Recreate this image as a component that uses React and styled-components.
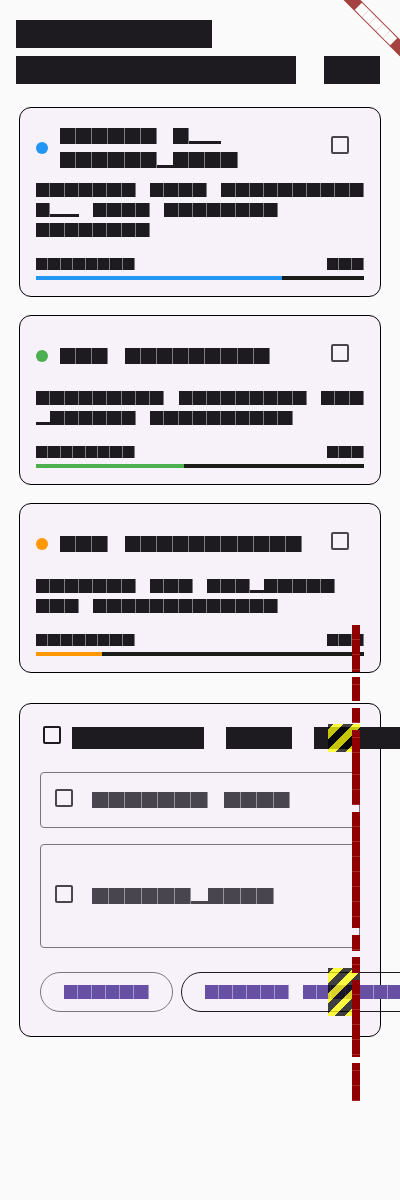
import React, { Fragment } from "react";
import styled, { createGlobalStyle } from "styled-components";

const GlobalStyle = createGlobalStyle`
  html, body {
    margin: 0;
    padding: 0;
    background: #fafafa;
    overflow: hidden;
  }
  body {
    font-family: "Liberation Sans", "Noto Sans", sans-serif;
  }
  * {
    box-sizing: border-box;
  }
`;

const INK = "#1d1b20";
const MUTED = "#49454f";
const OUTLINE = "#79747e";
const PRIMARY = "#6750a4";

// test-font metrics: every glyph is a square box of the font size
const type = {
  headline: { size: 28, lh: 36, ls: 0 },
  title: { size: 16, lh: 24, ls: 0.15 },
  titleLarge: { size: 22, lh: 28, ls: 0 },
  body: { size: 14, lh: 20, ls: 0.25 },
  bodyLarge: { size: 16, lh: 24, ls: 0.5 },
  small: { size: 12, lh: 16, ls: 0.4 },
  label: { size: 14, lh: 20, ls: 0.1 },
  banner: { size: 10.2, lh: 12, ls: 0 },
};

const tasks = [
  {
    color: "#2196f3",
    title: "Mobile App Development",
    text: "Rebuild core navigation app with smoother effects.",
    progress: 75,
  },
  {
    color: "#4caf50",
    title: "API Migration",
    text: "Migrating remaining old payment libraries.",
    progress: 45,
  },
  {
    color: "#ff9800",
    title: "CRM Integration",
    text: "Connect CRM campaigns and notifications",
    progress: 20,
  },
];

const subtasks = [
  { label: "Backend APIs", height: 56 },
  { label: "Development", height: 104 },
];

const overflowLabel = [
  { text: "RIGHT", h: 47, gap: 0 },
  { text: "BY", h: 24, gap: 5 },
  { text: "38", h: 15, gap: 7 },
  { text: "OVERFLOWED", h: 75, gap: 7 },
  { text: "PIXELS RIGHT", h: 116, gap: 7 },
  { text: "BY", h: 16, gap: 7 },
  { text: "38", h: 16, gap: 6 },
  { text: "OVERFLOWED", h: 77, gap: 7 },
  { text: "PIXELS", h: 38, gap: 6 },
];

function Txt({ text, kind, color = INK, nowrap, grow }) {
  const { size, lh, ls } = type[kind];
  return (
    <Lines $space={size + ls} $lead={(lh - size) / 2} $nowrap={nowrap} $grow={grow}>
      {text.split(" ").map((word, i) => (
        <Fragment key={i}>
          {i > 0 && " "}
          <Word>
            {[...word].map((c, j) => (
              <Glyph key={j} $size={size} $ls={ls} $color={color} $low={c === "p"}>
                {c}
              </Glyph>
            ))}
          </Word>
        </Fragment>
      ))}
    </Lines>
  );
}

function TaskCard({ task }) {
  return (
    <Card>
      <TitleRow>
        <Dot $color={task.color} />
        <Txt text={task.title} kind="title" grow />
        <CheckSlot>
          <Box $color={MUTED} />
        </CheckSlot>
      </TitleRow>
      <Description>
        <Txt text={task.text} kind="body" />
      </Description>
      <MetaRow>
        <Txt text="Progress" kind="small" />
        <Txt text={`${task.progress}%`} kind="small" />
      </MetaRow>
      <Track>
        <Fill $color={task.color} style={{ width: `${task.progress}%` }} />
      </Track>
    </Card>
  );
}

export default function App() {
  return (
    <Page>
      <GlobalStyle />
      <Header>
        <Txt text="Project Milestones Q4" kind="headline" />
      </Header>

      <TaskList>
        {tasks.map((t) => (
          <TaskCard key={t.title} task={t} />
        ))}
      </TaskList>

      <SubtaskCard>
        <HeadRow>
          <SmallSlot>
            <Box $color={INK} />
          </SmallSlot>
          <Txt text="Finish the onboarding flow" kind="titleLarge" nowrap />
          <OverflowMark />
        </HeadRow>

        <Subtasks>
          {subtasks.map((s) => (
            <Subtask key={s.label} $h={s.height}>
              <SubCheck>
                <Box $color={MUTED} />
              </SubCheck>
              <Txt text={s.label} kind="bodyLarge" color={MUTED} nowrap />
            </Subtask>
          ))}
        </Subtasks>

        <Actions>
          <Pill $outline={OUTLINE}>
            <Txt text="Cancel" kind="label" color={PRIMARY} nowrap />
          </Pill>
          <Pill $outline={INK} $gap>
            <Txt text="Submit changes" kind="label" color={PRIMARY} nowrap />
          </Pill>
          <OverflowMark />
        </Actions>
      </SubtaskCard>

      <OverflowText aria-hidden="true">
        {overflowLabel.map((s, i) => (
          <Segment key={i} $h={s.h} $gap={s.gap}>
            {s.text}
          </Segment>
        ))}
      </OverflowText>

      <Banner>
        <Txt text="DEBUG" kind="banner" color="#ffffff" nowrap />
      </Banner>
    </Page>
  );
}

const Page = styled.div`
  position: relative;
  width: 400px;
  min-height: 1200px;
  padding: 16px 16px 0;
  overflow: hidden;
  background: #fafafa;
`;

const Header = styled.header`
  margin-bottom: 19px;
`;

const Lines = styled.span`
  display: flex;
  flex-wrap: ${(p) => (p.$nowrap ? "nowrap" : "wrap")};
  align-content: flex-start;
  column-gap: ${(p) => p.$space}px;
  row-gap: ${(p) => p.$lead * 2}px;
  padding: ${(p) => p.$lead}px 0;
  flex: ${(p) => (p.$grow ? "1 1 0" : "none")};
  min-width: 0;
`;

const Word = styled.span`
  display: flex;
  flex: none;
`;

const Glyph = styled.span`
  position: relative;
  display: block;
  flex: none;
  width: ${(p) => p.$size + p.$ls}px;
  height: ${(p) => p.$size}px;
  background: ${(p) =>
    p.$low ? `linear-gradient(to top, ${p.$color} 20%, transparent 20%)` : p.$color};
  color: transparent;
  font-size: ${(p) => p.$size * 0.6}px;
  line-height: ${(p) => p.$size}px;
  text-align: center;
  overflow: hidden;

  &::after {
    content: "";
    display: ${(p) => (p.$ls > 0 && !p.$low ? "block" : "none")};
    position: absolute;
    top: 0;
    right: 0;
    width: 1px;
    height: 100%;
    background: rgba(247, 242, 250, 0.45);
  }
`;

const TaskList = styled.div`
  display: flex;
  flex-direction: column;
  gap: 18px;
`;

const Card = styled.section`
  margin: 0 3px;
  padding: 16px;
  background: #f7f2fa;
  border: 1px solid #000;
  border-radius: 12px;
`;

const TitleRow = styled.div`
  display: flex;
  align-items: center;
  min-height: 48px;
`;

const Dot = styled.span`
  flex: none;
  width: 12px;
  height: 12px;
  margin-right: 12px;
  border-radius: 50%;
  background: ${(p) => p.$color};
`;

const CheckSlot = styled.span`
  flex: none;
  align-self: flex-start;
  display: flex;
  justify-content: center;
  width: 48px;
  height: 48px;
  padding-top: 12px;
`;

const Box = styled.span`
  display: block;
  flex: none;
  width: 18px;
  height: 18px;
  border: 2px solid ${(p) => p.$color};
  border-radius: 2px;
`;

const Description = styled.div`
  margin-top: 8px;
`;

const MetaRow = styled.div`
  display: flex;
  justify-content: space-between;
  margin-top: 16px;
`;

const Track = styled.div`
  height: 4px;
  margin-top: 4px;
  background: #1a1c18;
`;

const Fill = styled.div`
  height: 100%;
  background: ${(p) => p.$color};
`;

const SubtaskCard = styled.section`
  margin: 30px 3px 0;
  padding: 20px;
  background: #f7f2fa;
  border: 1px solid #000;
  border-radius: 12px;
`;

const HeadRow = styled.div`
  position: relative;
  display: flex;
  height: 28px;
`;

const SmallSlot = styled.span`
  flex: none;
  width: 24px;
  margin-right: 8px;
  padding: 2px 0 0 3px;
`;

const Subtasks = styled.div`
  display: flex;
  flex-direction: column;
  gap: 16px;
  margin-top: 20px;
`;

const Subtask = styled.div`
  display: flex;
  align-items: center;
  height: ${(p) => p.$h}px;
  padding-left: 14px;
  border: 1px solid ${OUTLINE};
  border-radius: 4px;
`;

const SubCheck = styled.span`
  flex: none;
  margin: -5px 19px 0 0;
`;

const Actions = styled.div`
  position: relative;
  display: flex;
  align-items: center;
  height: 48px;
  margin-top: 20px;
`;

const Pill = styled.button`
  flex: none;
  display: flex;
  align-items: center;
  height: 40px;
  margin: 0 0 0 ${(p) => (p.$gap ? 8 : 0)}px;
  padding: 0 23px;
  background: transparent;
  border: 1px solid ${(p) => p.$outline};
  border-radius: 20px;
`;

const OverflowMark = styled.span`
  position: absolute;
  top: 0;
  right: 0;
  width: 32px;
  height: 100%;
  pointer-events: none;
  background: repeating-linear-gradient(
    135deg,
    rgba(0, 0, 0, 0.75) 0 3.54px,
    rgba(255, 255, 0, 0.75) 3.54px 10.61px,
    rgba(0, 0, 0, 0.75) 10.61px 14.14px
  );
`;

const OverflowText = styled.div`
  position: absolute;
  top: 625px;
  left: 352px;
  width: 8px;
  display: flex;
  flex-direction: column;
`;

const Segment = styled.span`
  display: block;
  height: ${(p) => p.$h}px;
  margin-top: ${(p) => p.$gap}px;
  background: repeating-linear-gradient(180deg, #900000 0 7px, #a52a2a 7px 7.5px);
  color: transparent;
  font-size: 6px;
  line-height: 7.5px;
  overflow: hidden;
  word-break: break-all;
`;

const Banner = styled.div`
  position: absolute;
  top: 18px;
  left: 336px;
  width: 80px;
  height: 12px;
  display: flex;
  justify-content: center;
  background: #a4423f;
  transform: rotate(45deg);
`;
